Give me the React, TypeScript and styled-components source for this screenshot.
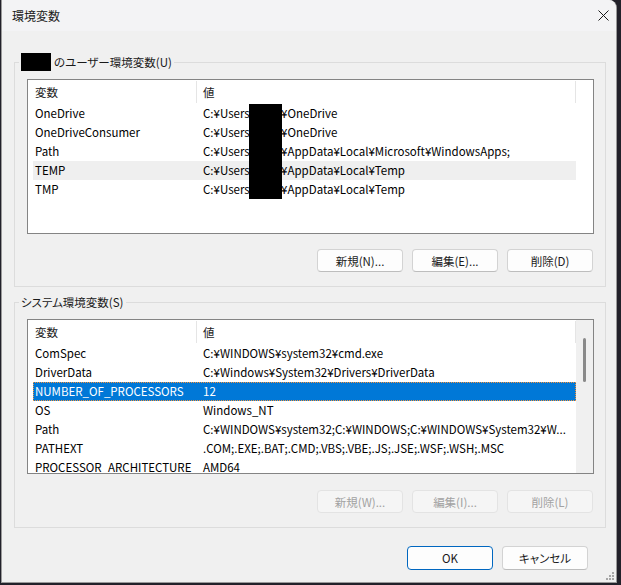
import React from 'react';
import styled, { createGlobalStyle } from 'styled-components';

const GlobalStyle = createGlobalStyle`
	html, body {
		margin: 0;
		padding: 0;
		background: #22212a;
	}
	body {
		width: 621px;
		height: 585px;
		overflow: hidden;
		font-family: "Noto Sans CJK JP", "Noto Sans", sans-serif;
		font-size: 11.5px;
		font-feature-settings: "palt";
		color: #000;
	}
`;

const Desktop = styled.div`
	padding-left: 1px;
	height: 585px;
`;

const Window = styled.div`
	position: relative;
	width: 614px;
	height: 582px;
	border: 1px solid #9a9a9a;
	border-top: none;
	border-radius: 0 8px 0 0;
	background: #f0f0f0;
	display: flex;
	flex-direction: column;
	overflow: hidden;
`;

const TitleBar = styled.div`
	height: 30px;
	flex-shrink: 0;
	display: flex;
	align-items: center;
	justify-content: space-between;
	padding: 0 7px 1px 10px;
	background: #f3f3f5;
	color: #1a1a1a;
	font-size: 12px;
`;

const Body = styled.div`
	display: flex;
	flex-direction: column;
	padding: 31px 10px 0 12px;
`;

const GroupBox = styled.div<{ $gap?: number }>`
	display: flex;
	flex-direction: column;
	border: 1px solid #dcdcdc;
	padding: 0 11px 14px 12px;
	margin-top: ${(p) => p.$gap ?? 0}px;
`;

const Legend = styled.div`
	align-self: flex-start;
	display: flex;
	align-items: center;
	gap: 3px;
	height: 18px;
	margin: -10px 0 0 -8px;
	padding: 0 2px;
	background: #f0f0f0;
	color: #1a1a1a;
`;

const OwnerMask = styled.span`
	width: 30px;
	height: 18px;
	background: #000;
`;

const ListView = styled.div`
	height: 155px;
	box-sizing: border-box;
	margin-top: 8px;
	border: 1px solid #848484;
	background: #fff;
	display: flex;
	overflow: hidden;
`;

const ListMain = styled.div`
	width: 548px;
	flex-shrink: 0;
	display: flex;
	flex-direction: column;
`;

const HeaderRow = styled.div`
	display: flex;
	height: 24px;
	flex-shrink: 0;
`;

const HeaderCell = styled.div<{ $w: number; $pad: number }>`
	width: ${(p) => p.$w}px;
	box-sizing: border-box;
	margin: 1px 0 1px;
	padding-left: ${(p) => p.$pad}px;
	border-right: 1px solid #e5e5e5;
	display: flex;
	align-items: center;
	color: #1a1a1a;
`;

const Row = styled.div<{ $state?: 'hover' | 'selected' }>`
	display: flex;
	height: 19px;
	flex-shrink: 0;
	margin-left: 5px;
	box-sizing: border-box;
	background: ${(p) =>
		p.$state === 'selected' ? '#0078d7' : p.$state === 'hover' ? '#efefef' : 'transparent'};
	color: ${(p) => (p.$state === 'selected' ? '#fff' : '#000')};
	outline: ${(p) => (p.$state === 'selected' ? '1px dotted #f7943a' : 'none')};
	outline-offset: -1px;
`;

const Cell = styled.div<{ $w?: number }>`
	display: block;
	height: 19px;
	line-height: 19px;
	padding: 0 4px 0 2px;
	white-space: nowrap;
	overflow: hidden;
	text-overflow: ellipsis;
	${(p) => (p.$w ? `width: ${p.$w}px; flex-shrink: 0;` : 'flex: 1; min-width: 0;')}
	box-sizing: border-box;
`;

const NameMask = styled.span`
	display: inline-block;
	vertical-align: top;
	width: 33px;
	height: 19px;
	margin-left: -7px;
	margin-right: -1px;
	background: #000;
`;

const ScrollTrack = styled.div`
	flex: 1;
	background: #f0f0f0;
	display: flex;
	justify-content: center;
`;

const ScrollThumb = styled.div`
	width: 3px;
	height: 44px;
	margin-top: 18px;
	border-radius: 2px;
	background: #8a8a8a;
`;

const ButtonRow = styled.div<{ $top: number; $right: number }>`
	display: flex;
	justify-content: flex-end;
	gap: 9px;
	margin-top: ${(p) => p.$top}px;
	padding-right: ${(p) => p.$right}px;
`;

const Button = styled.button<{ $primary?: boolean; $h?: number }>`
	width: 86px;
	height: ${(p) => p.$h ?? 23}px;
	box-sizing: border-box;
	padding: 0;
	border-radius: 4px;
	font: inherit;
	color: #1a1a1a;
	background: #fdfdfd;
	border: 1px solid ${(p) => (p.$primary ? '#0067c0' : '#d3d3d3')};
	border-bottom-color: ${(p) => (p.$primary ? '#0067c0' : '#bdbdbd')};

	&:disabled {
		color: #a2a2a2;
		background: #f5f5f5;
		border-color: #e3e3e3;
	}
`;

const Grip = styled.svg`
	position: absolute;
	right: 2px;
	bottom: 2px;
`;

type Entry = { name: string; value: React.ReactNode; state?: 'hover' | 'selected' };

const userPath = (rest: string) => (
	<>
		C:¥Users¥
		<NameMask />
		{rest}
	</>
);

const userVars: Entry[] = [
	{ name: 'OneDrive', value: userPath('¥OneDrive') },
	{ name: 'OneDriveConsumer', value: userPath('¥OneDrive') },
	{ name: 'Path', value: userPath('¥AppData¥Local¥Microsoft¥WindowsApps;') },
	{ name: 'TEMP', value: userPath('¥AppData¥Local¥Temp'), state: 'hover' },
	{ name: 'TMP', value: userPath('¥AppData¥Local¥Temp') },
];

const systemVars: Entry[] = [
	{ name: 'ComSpec', value: 'C:¥WINDOWS¥system32¥cmd.exe' },
	{ name: 'DriverData', value: 'C:¥Windows¥System32¥Drivers¥DriverData' },
	{ name: 'NUMBER_OF_PROCESSORS', value: '12', state: 'selected' },
	{ name: 'OS', value: 'Windows_NT' },
	{ name: 'Path', value: 'C:¥WINDOWS¥system32;C:¥WINDOWS;C:¥WINDOWS¥System32¥W...' },
	{ name: 'PATHEXT', value: '.COM;.EXE;.BAT;.CMD;.VBS;.VBE;.JS;.JSE;.WSF;.WSH;.MSC' },
	{ name: 'PROCESSOR_ARCHITECTURE', value: 'AMD64' },
];

function VarList({ rows, scroll }: { rows: Entry[]; scroll?: boolean }) {
	return (
		<ListView>
			<ListMain>
				<HeaderRow>
					<HeaderCell $w={169} $pad={7}>変数</HeaderCell>
					<HeaderCell $w={379} $pad={6}>値</HeaderCell>
				</HeaderRow>
				{rows.map((r) => (
					<Row key={r.name} $state={r.state}>
						<Cell $w={168}>{r.name}</Cell>
						<Cell>{r.value}</Cell>
					</Row>
				))}
			</ListMain>
			{scroll && (
				<ScrollTrack>
					<ScrollThumb />
				</ScrollTrack>
			)}
		</ListView>
	);
}

export default function App() {
	return (
		<>
			<GlobalStyle />
			<Desktop>
				<Window>
					<TitleBar>
						<span>環境変数</span>
						<svg width="11" height="11" viewBox="0 0 11 11">
							<path d="M0.5 0.5 L10.5 10.5 M10.5 0.5 L0.5 10.5" stroke="#1a1a1a" strokeWidth="1" />
						</svg>
					</TitleBar>
					<Body>
						<GroupBox>
							<Legend>
								<OwnerMask />
								<span>のユーザー環境変数(U)</span>
							</Legend>
							<VarList rows={userVars} />
							<ButtonRow $top={15} $right={1}>
								<Button>新規(N)...</Button>
								<Button>編集(E)...</Button>
								<Button>削除(D)</Button>
							</ButtonRow>
						</GroupBox>
						<GroupBox $gap={15}>
							<Legend>
								<span>システム環境変数(S)</span>
							</Legend>
							<VarList rows={systemVars} scroll />
							<ButtonRow $top={16} $right={1}>
								<Button disabled>新規(W)...</Button>
								<Button disabled>編集(I)...</Button>
								<Button disabled>削除(L)</Button>
							</ButtonRow>
						</GroupBox>
						<ButtonRow $top={18} $right={18}>
							<Button $primary $h={24}>OK</Button>
							<Button $h={24}>キャンセル</Button>
						</ButtonRow>
					</Body>
					<Grip width="9" height="9" viewBox="0 0 9 9">
						<g fill="#a6a6a6">
							<rect x="7" y="1" width="2" height="2" />
							<rect x="4" y="4" width="2" height="2" />
							<rect x="7" y="4" width="2" height="2" />
							<rect x="1" y="7" width="2" height="2" />
							<rect x="4" y="7" width="2" height="2" />
							<rect x="7" y="7" width="2" height="2" />
						</g>
					</Grip>
				</Window>
			</Desktop>
		</>
	);
}
